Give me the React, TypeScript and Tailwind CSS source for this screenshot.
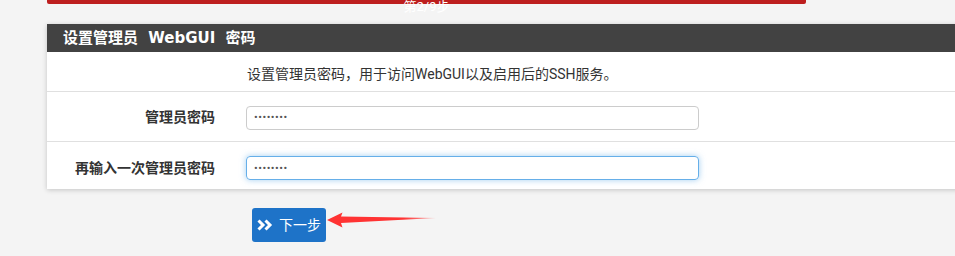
import React from 'react';

const font = { fontFamily: 'Roboto, "Noto Sans CJK SC", sans-serif' };
const headFont = { fontFamily: '"DejaVu Sans", "Noto Sans CJK SC", sans-serif' };

const Dots: React.FC = () => (
  <span className="text-[#555] text-[11px] tracking-[0.5px] leading-none">••••••••</span>
);

const Arrow: React.FC = () => (
  <svg className="absolute left-[325px] top-[210px]" width="114" height="20" viewBox="325 210 114 20">
    <defs>
      <linearGradient id="fade" x1="0" x2="1" y1="0" y2="0">
        <stop offset="0.7" stopColor="#f33" stopOpacity="1" />
        <stop offset="1" stopColor="#f33" stopOpacity="0.35" />
      </linearGradient>
    </defs>
    <polygon
      points="327,220 342.5,212.5 341,216.5 436,218 341,223 342.5,227.5"
      fill="url(#fade)"
    />
  </svg>
);

const App: React.FC = () => {
  return (
    <div className="relative h-[256px] w-full overflow-hidden bg-[#f4f4f4]" style={font}>
      {/* step banner, mostly scrolled off */}
      <div className="ml-[47px] w-[759px] h-[30px] -mt-[26px] bg-[#bd1e1e] rounded-b-[2px] flex items-end justify-center">
        <span className="text-white text-[13px] leading-[14px] -mb-[10px]">第2/9步</span>
      </div>

      <div className="ml-[47px] mt-[20px] w-[940px] bg-white shadow-[0_1px_5px_rgba(0,0,0,0.2)]">
        <div className="h-[28px] bg-[#424242] pl-[16px] flex items-center">
          <h2 className="text-white text-[15px] font-bold leading-none [word-spacing:5px]" style={headFont}>
            设置管理员 WebGUI 密码
          </h2>
        </div>

        <div className="h-[40px] border-b border-[#e0e0e0] pl-[200px] pt-[12px]">
          <p className="text-[14px] leading-[20px] text-[#333]">设置管理员密码，用于访问WebGUI以及启用后的SSH服务。</p>
        </div>

        <div className="h-[50px] border-b border-[#e0e0e0] flex items-center pt-[2px]">
          <label className="w-[168px] text-right text-[14px] font-bold text-[#333]">管理员密码</label>
          <div className="ml-[31px] w-[453px] h-[24px] border border-[#ccc] rounded-[4px] flex items-center pl-[7px]">
            <Dots />
          </div>
        </div>

        <div className="h-[47px] flex items-center pt-[5px]">
          <label className="w-[168px] text-right text-[14px] font-bold text-[#333]">再输入一次管理员密码</label>
          <div className="ml-[31px] w-[453px] h-[24px] border border-[#66afe9] rounded-[4px] shadow-[0_0_6px_rgba(102,175,233,0.6)] flex items-center pl-[7px]">
            <Dots />
          </div>
        </div>
      </div>

      <button className="ml-[252px] mt-[19px] w-[74px] h-[34px] bg-[#1e73c8] rounded-[3px] flex items-center pl-[5px] gap-[6px] text-white text-[14px]">
        <svg width="16" height="12" viewBox="0 0 16 12">
          <path d="M1.5 1.5 L6 6 L1.5 10.5" fill="none" stroke="white" strokeWidth="3" strokeLinejoin="miter" />
          <path d="M8.5 1.5 L13 6 L8.5 10.5" fill="none" stroke="white" strokeWidth="3" strokeLinejoin="miter" />
        </svg>
        <span className="leading-none">下一步</span>
      </button>

      <Arrow />
    </div>
  );
};

export default App;
